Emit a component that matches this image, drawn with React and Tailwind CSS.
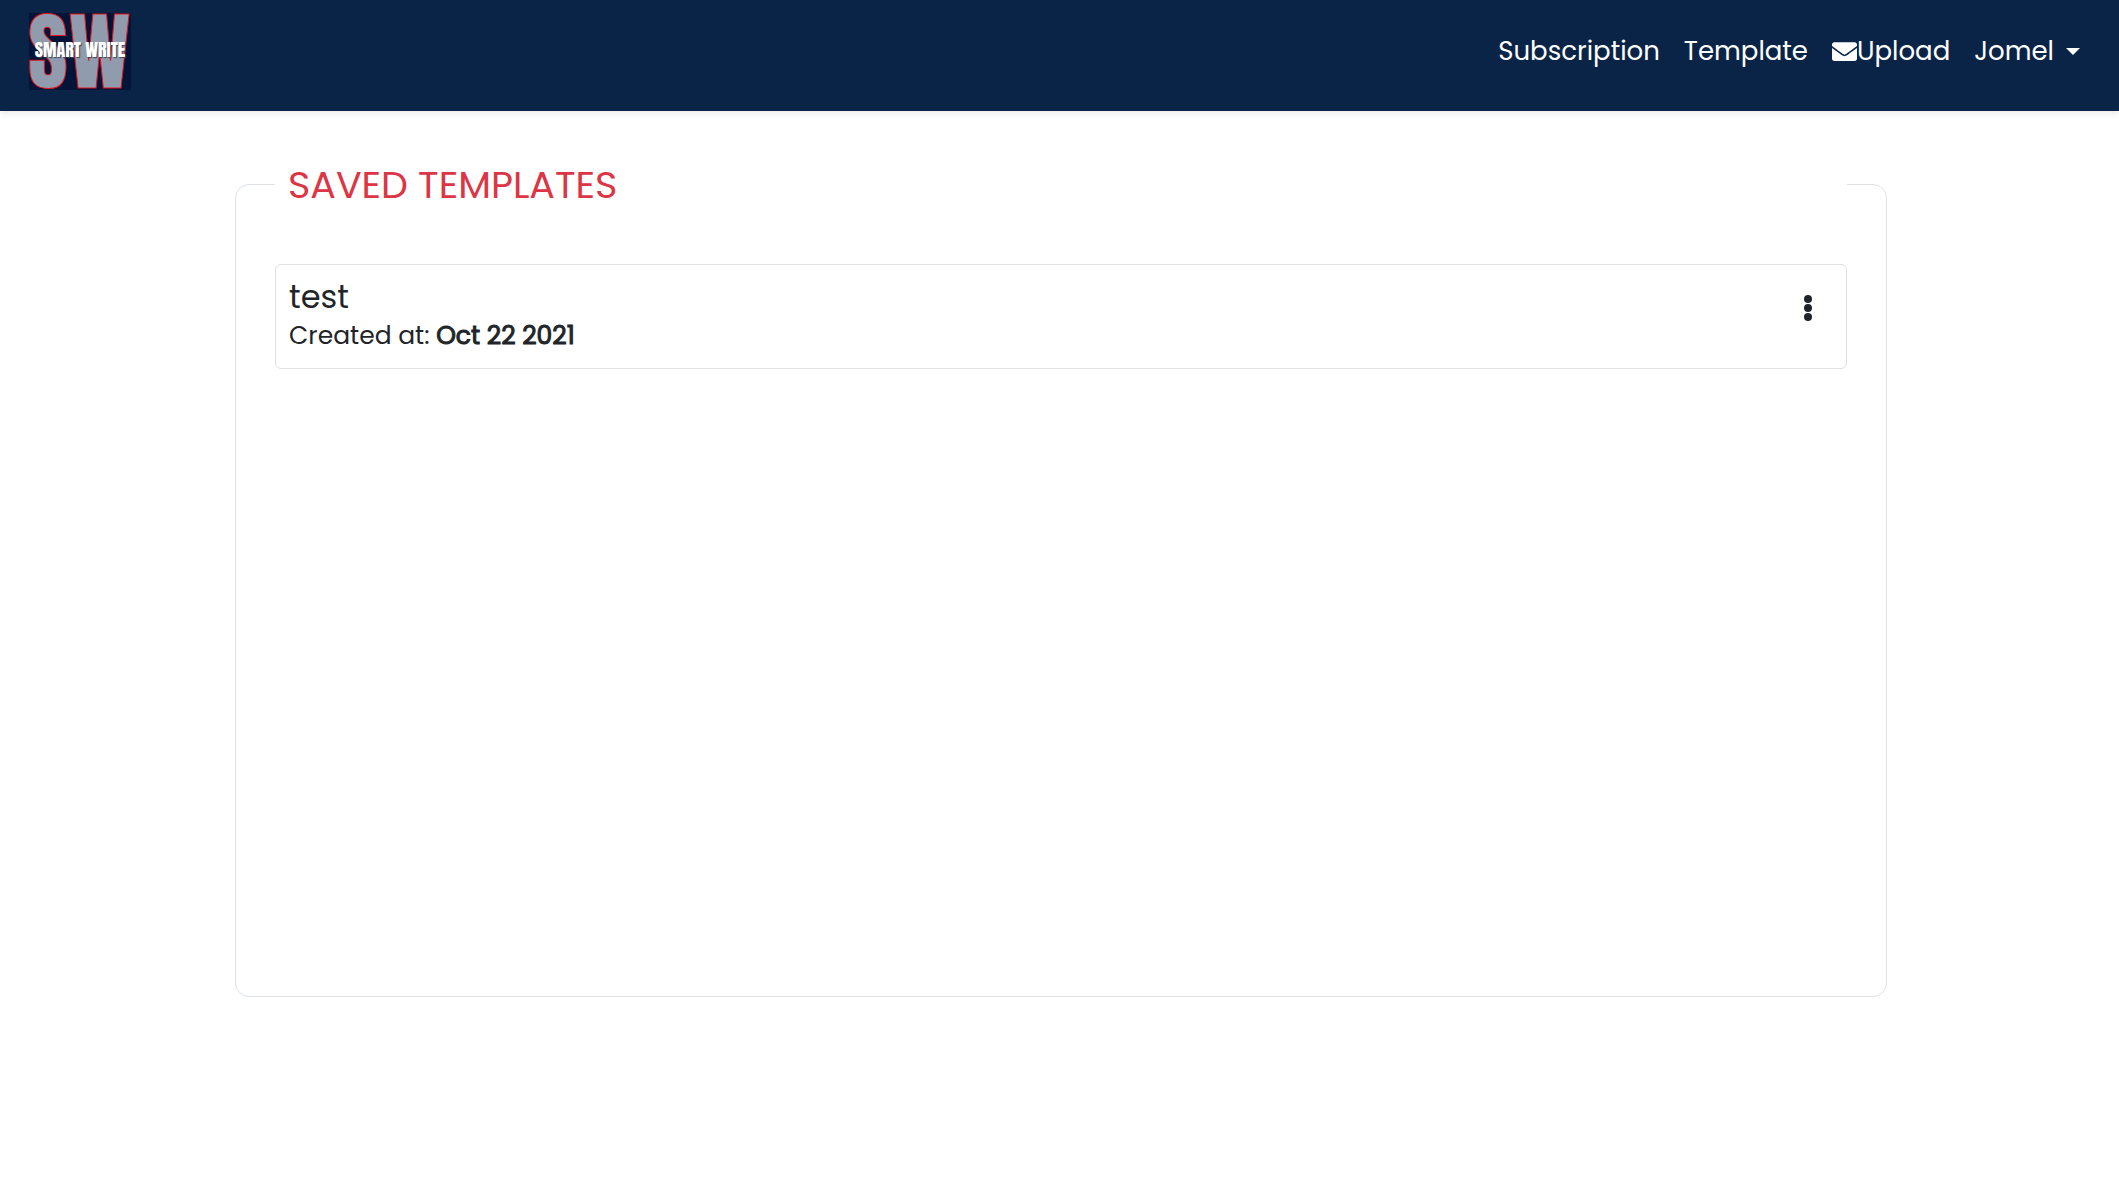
import { FaEnvelope } from "react-icons/fa";

const templates = [{ name: "test", created: "Oct 22 2021" }];

function Logo() {
  return (
    <a href="#" aria-label="Smart Write" className="block h-[77px] w-[102px]">
      <svg viewBox="0 0 102 77" className="size-full">
        <rect width="102" height="77" fill="#021438" />
        <g fontFamily="Anton, 'Open Sans Condensed', 'Roboto Condensed', sans-serif">
          <g fontSize="86" fill="#919bae" stroke="#e3141f" strokeWidth="1">
            <text x="-1" y="75">S</text>
            <text x="40" y="75">W</text>
          </g>
          <text
            x="51"
            y="44"
            textAnchor="middle"
            fontSize="18"
            fill="#ffffff"
            className="[text-shadow:1px_1px_1px_#3c4558]"
          >
            SMART WRITE
          </text>
        </g>
      </svg>
    </a>
  );
}

function NavLink({ children }) {
  return (
    <a href="#" className="flex items-center px-3">
      {children}
    </a>
  );
}

function TemplateCard({ name, created }) {
  return (
    <article className="flex items-start justify-between rounded-md border border-[#dfdfdf] p-[13px]">
      <div className="leading-[38px]">
        <h2 className="mb-px text-[32px]">{name}</h2>
        <p className="text-[25px]">
          Created at: <strong className="font-normal [-webkit-text-stroke:1px_#212529]">{created}</strong>
        </p>
      </div>
      <button type="button" aria-label="Template options" className="mt-4 mr-[11px] flex size-7 items-center justify-center">
        <svg viewBox="0 0 8 26" className="h-[26px] w-2 fill-[#212529]">
          <circle cx="4" cy="4" r="4" />
          <circle cx="4" cy="13" r="4" />
          <circle cx="4" cy="22" r="4" />
        </svg>
      </button>
    </article>
  );
}

export default function App() {
  return (
    <div className="min-h-screen bg-white font-[Poppins,Inter,sans-serif] text-[26px] text-[#212529]">
      <header className="flex items-center justify-between bg-[#0a2447] pt-[13px] pr-[27px] pb-[21px] pl-[29px] text-white shadow-[0_3px_6px_rgba(0,0,0,0.075)]">
        <Logo />
        <nav className="flex items-center">
          <NavLink>Subscription</NavLink>
          <NavLink>Template</NavLink>
          <NavLink>
            <FaEnvelope className="size-[25px]" />
            Upload
          </NavLink>
          <button type="button" className="flex items-center gap-3 px-3">
            Jomel
            <svg viewBox="0 0 14 8" className="h-2 w-[14px] fill-white">
              <path d="M0 0h14L7 7z" />
            </svg>
          </button>
        </nav>
      </header>
      <main className="pt-[45px] pr-[232px] pl-[235px]">
        <fieldset className="min-h-[841px] rounded-[14px] border border-[#dee2e6] px-[39px] pt-[38px]">
          <legend className="mb-[13px] w-full px-[13px] text-[38px] leading-[57px] text-[#dc3545]">
            SAVED TEMPLATES
          </legend>
          {templates.map((t) => (
            <TemplateCard key={t.name} {...t} />
          ))}
        </fieldset>
      </main>
    </div>
  );
}
